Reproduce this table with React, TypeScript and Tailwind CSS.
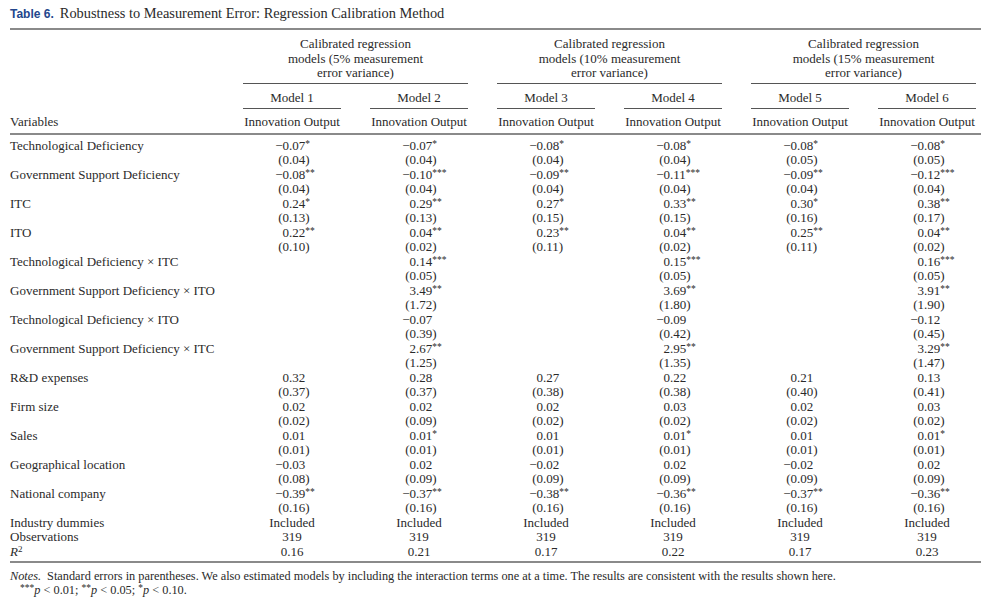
import React from "react";

type Cell = [string, string] | null;

const rows: { label: string; cells: Cell[] }[] = [
  { label: "Technological Deficiency", cells: [["−0.07*", "(0.04)"], ["−0.07*", "(0.04)"], ["−0.08*", "(0.04)"], ["−0.08*", "(0.04)"], ["−0.08*", "(0.05)"], ["−0.08*", "(0.05)"]] },
  { label: "Government Support Deficiency", cells: [["−0.08**", "(0.04)"], ["−0.10***", "(0.04)"], ["−0.09**", "(0.04)"], ["−0.11***", "(0.04)"], ["−0.09**", "(0.04)"], ["−0.12***", "(0.04)"]] },
  { label: "ITC", cells: [["0.24*", "(0.13)"], ["0.29**", "(0.13)"], ["0.27*", "(0.15)"], ["0.33**", "(0.15)"], ["0.30*", "(0.16)"], ["0.38**", "(0.17)"]] },
  { label: "ITO", cells: [["0.22**", "(0.10)"], ["0.04**", "(0.02)"], ["0.23**", "(0.11)"], ["0.04**", "(0.02)"], ["0.25**", "(0.11)"], ["0.04**", "(0.02)"]] },
  { label: "Technological Deficiency × ITC", cells: [null, ["0.14***", "(0.05)"], null, ["0.15***", "(0.05)"], null, ["0.16***", "(0.05)"]] },
  { label: "Government Support Deficiency × ITO", cells: [null, ["3.49**", "(1.72)"], null, ["3.69**", "(1.80)"], null, ["3.91**", "(1.90)"]] },
  { label: "Technological Deficiency × ITO", cells: [null, ["−0.07", "(0.39)"], null, ["−0.09", "(0.42)"], null, ["−0.12", "(0.45)"]] },
  { label: "Government Support Deficiency × ITC", cells: [null, ["2.67**", "(1.25)"], null, ["2.95**", "(1.35)"], null, ["3.29**", "(1.47)"]] },
  { label: "R&D expenses", cells: [["0.32", "(0.37)"], ["0.28", "(0.37)"], ["0.27", "(0.38)"], ["0.22", "(0.38)"], ["0.21", "(0.40)"], ["0.13", "(0.41)"]] },
  { label: "Firm size", cells: [["0.02", "(0.02)"], ["0.02", "(0.09)"], ["0.02", "(0.02)"], ["0.03", "(0.02)"], ["0.02", "(0.02)"], ["0.03", "(0.02)"]] },
  { label: "Sales", cells: [["0.01", "(0.01)"], ["0.01*", "(0.01)"], ["0.01", "(0.01)"], ["0.01*", "(0.01)"], ["0.01", "(0.01)"], ["0.01*", "(0.01)"]] },
  { label: "Geographical location", cells: [["−0.03", "(0.08)"], ["0.02", "(0.09)"], ["−0.02", "(0.09)"], ["0.02", "(0.09)"], ["−0.02", "(0.09)"], ["0.02", "(0.09)"]] },
  { label: "National company", cells: [["−0.39**", "(0.16)"], ["−0.37**", "(0.16)"], ["−0.38**", "(0.16)"], ["−0.36**", "(0.16)"], ["−0.37**", "(0.16)"], ["−0.36**", "(0.16)"]] },
];

const groups = ["5%", "10%", "15%"];
const r2 = ["0.16", "0.21", "0.17", "0.22", "0.17", "0.23"];

const grid = "grid grid-cols-[204px_repeat(6,98px)] gap-x-[29px]";

function Stars({ s }: { s: string }) {
  return <span className="relative -top-[3px] text-[9.5px] leading-none">{s}</span>;
}

function Num({ v }: { v: string }) {
  const m = v.match(/^(.*?)(\**)$/) || ["", v, ""];
  const body = m[1];
  const stars = m[2];
  const dot = body.indexOf(".");
  return (
    <div className="flex">
      <span className="w-[45px] text-right">{body.slice(0, dot)}</span>
      <span>
        {body.slice(dot)}
        {stars && <Stars s={stars} />}
      </span>
    </div>
  );
}

export default function App() {
  return (
    <div className="w-[981px] h-[600px] overflow-hidden bg-white pl-[10px] font-['Liberation_Serif',serif] text-[13px] leading-[14.5px] text-[#2a2a2a]">
      <div className="pt-[5px] h-[28px] text-[14.4px] leading-[17px] whitespace-nowrap">
        <span className="font-['Liberation_Sans',sans-serif] font-bold text-[12px] text-[#23468c]">Table 6.</span>
        <span className="ml-[6px]">Robustness to Measurement Error: Regression Calibration Method</span>
      </div>
      <div className="h-[2px] bg-[#8a8a8a]" />

      {/* header */}
      <div className={`${grid} pt-[7px]`}>
        <div className="row-span-3 self-end pb-[3px]">Variables</div>
        {groups.map((g) => (
          <div key={g} className="col-span-2 text-center pb-[2px] border-b border-[#555]">
            Calibrated regression
            <br />
            models ({g} measurement
            <br />
            error variance)
          </div>
        ))}
        {[1, 2, 3, 4, 5, 6].map((n) => (
          <div key={n} className="text-center pt-[7px] pb-[3px] border-b border-[#555]">
            Model {n}
          </div>
        ))}
        {[1, 2, 3, 4, 5, 6].map((n) => (
          <div key={n} className="text-center whitespace-nowrap pt-[6px] pb-[3px]">
            Innovation Output
          </div>
        ))}
      </div>
      <div className="h-[2px] bg-[#8a8a8a]" />

      {/* body */}
      <div className={`${grid} pt-[4px] pb-[2px]`}>
        {rows.map((r) => (
          <React.Fragment key={r.label}>
            <div className="whitespace-nowrap">{r.label}</div>
            {r.cells.map((c, i) => (
              <div key={i} className="pl-[1px]">{c && <Num v={c[0]} />}</div>
            ))}
            <div />
            {r.cells.map((c, i) => (
              <div key={i} className="pl-[1px]">{c && <Num v={c[1]} />}</div>
            ))}
          </React.Fragment>
        ))}
        <div>Industry dummies</div>
        {r2.map((_, i) => (
          <div key={i} className="text-center">Included</div>
        ))}
        <div>Observations</div>
        {r2.map((_, i) => (
          <div key={i} className="text-center">319</div>
        ))}
        <div>
          <i>R</i>
          <span className="relative -top-[4px] text-[9px] leading-none">2</span>
        </div>
        {r2.map((v, i) => (
          <div key={i} className="text-center">{v}</div>
        ))}
      </div>
      <div className="h-[2px] bg-[#8a8a8a]" />

      {/* notes */}
      <div className="pt-[6px] text-[12.3px] leading-[14px] whitespace-nowrap">
        <div>
          <i>Notes.</i>
          <span className="ml-[6px]">
            Standard errors in parentheses. We also estimated models by including the interaction terms one at a time. The results are consistent with the results shown here.
          </span>
        </div>
        <div className="pl-[10px]">
          <Stars s="***" />
          <i>p</i> &lt; 0.01; <Stars s="**" />
          <i>p</i> &lt; 0.05; <Stars s="*" />
          <i>p</i> &lt; 0.10.
        </div>
      </div>
    </div>
  );
}
